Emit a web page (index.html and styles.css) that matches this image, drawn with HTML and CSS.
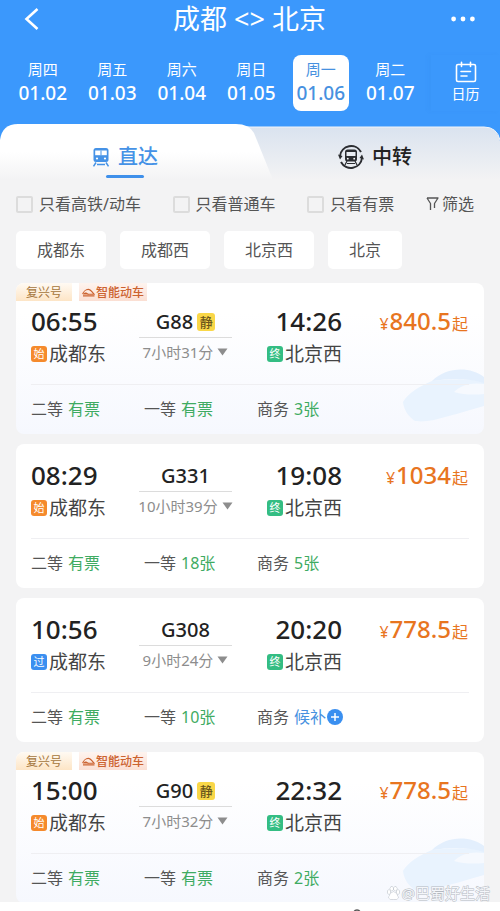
FILE: index.html
```html
<!DOCTYPE html>
<html lang="zh-CN">
<head>
<meta charset="utf-8">
<meta name="viewport" content="width=device-width, initial-scale=1">
<title>成都 - 北京</title>
<link rel="stylesheet" href="styles.css">
</head>
<body>
<svg class="defs" aria-hidden="true">
  <symbol id="fast-train" viewBox="0 0 13 9">
    <path d="M.6 6.200C1.400 3.600 4 1.400 6.200 1.400c2.200 0 3.600 2 5.800 4.800H5.500M1 7.900h11.500" fill="none" stroke="currentColor" stroke-width="1.100"/>
    <path d="M.8 6.500C2 4 4.500 3.600 6.800 6.500Z" fill="currentColor"/>
  </symbol>
  <symbol id="ghost-train" viewBox="0 0 84 60">
    <path d="M3 34C8 25 20 18 32 13 50 11 70 10 84 14V38C66 43 50 48 34 52c-8 1.500-16 2-20 .5C10 49 4 44 3 34Z" fill="#e9f3fe"/>
    <path d="M32 13C46 -1 70-2 84 9v6C68 10 52 10 32 13Z" fill="#e3effd"/>
    <path d="M54 24c6-7 18-10 30-8v10c-10 1-20 1-30-2Z" fill="#f6f9fe"/>
  </symbol>
  <symbol id="caret" viewBox="0 0 11 8"><path d="M.5.5h10L5.500 7.500Z" fill="#8d8d8d"/></symbol>
</svg>
<div class="app">
  <header class="header">
    <div class="title-bar">
      <button class="icon-button" aria-label="返回">
        <svg width="16" height="22" viewBox="0 0 16 22"><path d="M13.500 1 2.500 11l11 10" fill="none" stroke="#fff" stroke-width="2.600"/></svg>
      </button>
      <h1>成都 &lt;&gt; 北京</h1>
      <button class="icon-button" aria-label="更多">
        <svg width="24" height="6" viewBox="0 0 24 6" fill="#fff"><circle cx="2.600" cy="3" r="2.400"/><circle cx="12" cy="3" r="2.400"/><circle cx="21.400" cy="3" r="2.400"/></svg>
      </button>
    </div>
    <div class="date-bar">
      <div class="days">
        <button class="day"><span>周四</span><b>01.02</b></button>
        <button class="day"><span>周五</span><b>01.03</b></button>
        <button class="day"><span>周六</span><b>01.04</b></button>
        <button class="day"><span>周日</span><b>01.05</b></button>
        <button class="day selected"><span>周一</span><b>01.06</b></button>
        <button class="day"><span>周二</span><b>01.07</b></button>
      </div>
      <button class="calendar">
        <svg width="22" height="22" viewBox="0 0 22 22" fill="none" stroke="#fff" stroke-width="1.600" stroke-linecap="round"><path d="M3 3.500h16q1.500 0 1.500 1.500v14q0 1.500-1.500 1.500H3Q1.500 20.500 1.500 19V5q0-1.500 1.500-1.500Z"/><path d="M6.500 1.200v4.300M15.500 1.200v4.300M6 10.500h9.500M6 15h6"/></svg>
        <span>日历</span>
      </button>
    </div>
  </header>

  <nav class="tabs">
    <svg class="tabs-shape" viewBox="0 0 500 56" preserveAspectRatio="none" aria-hidden="true">
      <defs>
        <linearGradient id="back" x1="0" y1="0" x2="0" y2="1"><stop offset="0" stop-color="#dae3ef"/><stop offset="1" stop-color="#f3f3f4"/></linearGradient>
        <linearGradient id="front" x1="0" y1="0" x2="0" y2="1"><stop offset="0" stop-color="#fff"/><stop offset=".5" stop-color="#fff"/><stop offset="1" stop-color="#f3f3f4"/></linearGradient>
      </defs>
      <path d="M200 3H484q13 0 16 14v39H200Z" fill="url(#back)"/>
      <path d="M200 3H484q13 0 16 13" fill="none" stroke="#f2f6fb"/>
      <path d="M0 56V16Q2 0 18 0H236q13 0 18 9l19 47Z" fill="url(#front)"/>
    </svg>
    <button class="tab active">
      <svg width="18" height="20" viewBox="0 0 18 20"><path d="M4 1h10q2.500 0 2.500 2.500v9Q16.500 15 14 15H4Q1.500 15 1.500 12.500v-9Q1.500 1 4 1Z" fill="#4592e6"/><path d="M3.200 3.500h11.600v4.700H3.200Z" fill="#fff"/><path d="M8.500 3.500h1v4.700h-1Z" fill="#4592e6"/><circle cx="5" cy="11.500" r="1.100" fill="#fff"/><circle cx="13" cy="11.500" r="1.100" fill="#fff"/><path d="m4 15.500-2.500 3.800M14 15.500l2.500 3.800M5 17.500h8" stroke="#4592e6" stroke-width="1.500"/></svg>
      <span>直达</span>
    </button>
    <button class="tab">
      <svg width="26" height="26" viewBox="0 0 26 26"><g fill="none" stroke="#2b2d31" stroke-width="2"><path d="M2 12A11.200 11.200 0 0 1 23 8M24 14A11.200 11.200 0 0 1 3 18"/></g><path d="M0 10.500 4.500 12 2 15.500ZM26 15.500 21.500 14 24 10.500Z" fill="#2b2d31"/><rect x="7" y="5.500" width="12" height="12" rx="2.500" fill="#2b2d31"/><path d="M8.500 8h9v4h-9Z" fill="#e9edf3"/><circle cx="9.800" cy="14.700" r=".9" fill="#fff"/><circle cx="16.200" cy="14.700" r=".9" fill="#fff"/><path d="m9 17-2 4M17 17l2 4M9 19.500h8" stroke="#2b2d31" stroke-width="1.200"/></svg>
      <span>中转</span>
    </button>
  </nav>

  <main>
    <form class="filters">
      <label><input type="checkbox">只看高铁/动车</label>
      <label><input type="checkbox">只看普通车</label>
      <label><input type="checkbox">只看有票</label>
      <button type="button" class="filter-button">
        <svg width="13" height="14" viewBox="0 0 13 14" fill="none" stroke="#555" stroke-width="1.300" stroke-linejoin="round"><path d="M1 1h11L8.500 6.500V11M1 1l3.500 5.500V13"/></svg>筛选
      </button>
    </form>
    <div class="chips">
      <button>成都东</button><button>成都西</button><button>北京西</button><button>北京</button>
    </div>

    <section class="list">
      <article class="card special">
        <svg class="ghost"><use href="#ghost-train"/></svg>
        <div class="tags"><span class="tag">复兴号</span><span class="tag smart"><svg width="13" height="9"><use href="#fast-train"/></svg>智能动车</span></div>
        <div class="trip">
          <div class="stop"><time>06:55</time><p><i class="mark start">始</i>成都东</p></div>
          <div class="train"><h2>G88<i class="quiet">静</i></h2><p>7小时31分<svg width="11" height="8"><use href="#caret"/></svg></p></div>
          <div class="stop arrive"><time>14:26</time><p><i class="mark end">终</i>北京西</p></div>
          <div class="price"><small>¥</small>840.5<small>起</small></div>
        </div>
        <div class="seats"><span>二等<em>有票</em></span><span>一等<em>有票</em></span><span>商务<em>3张</em></span></div>
      </article>

      <article class="card">
        <div class="trip">
          <div class="stop"><time>08:29</time><p><i class="mark start">始</i>成都东</p></div>
          <div class="train"><h2>G331</h2><p>10小时39分<svg width="11" height="8"><use href="#caret"/></svg></p></div>
          <div class="stop arrive"><time>19:08</time><p><i class="mark end">终</i>北京西</p></div>
          <div class="price"><small>¥</small>1034<small>起</small></div>
        </div>
        <div class="seats"><span>二等<em>有票</em></span><span>一等<em>18张</em></span><span>商务<em>5张</em></span></div>
      </article>

      <article class="card">
        <div class="trip">
          <div class="stop"><time>10:56</time><p><i class="mark pass">过</i>成都东</p></div>
          <div class="train"><h2>G308</h2><p>9小时24分<svg width="11" height="8"><use href="#caret"/></svg></p></div>
          <div class="stop arrive"><time>20:20</time><p><i class="mark end">终</i>北京西</p></div>
          <div class="price"><small>¥</small>778.5<small>起</small></div>
        </div>
        <div class="seats"><span>二等<em>有票</em></span><span>一等<em>10张</em></span><span>商务<a href="#waitlist">候补<svg width="16" height="16" viewBox="0 0 16 16"><circle cx="8" cy="8" r="8" fill="#3a8ff0"/><path d="M8 4v8M4 8h8" stroke="#fff" stroke-width="1.500"/></svg></a></span></div>
      </article>

      <article class="card special">
        <svg class="ghost"><use href="#ghost-train"/></svg>
        <div class="tags"><span class="tag">复兴号</span><span class="tag smart"><svg width="13" height="9"><use href="#fast-train"/></svg>智能动车</span></div>
        <div class="trip">
          <div class="stop"><time>15:00</time><p><i class="mark start">始</i>成都东</p></div>
          <div class="train"><h2>G90<i class="quiet">静</i></h2><p>7小时32分<svg width="11" height="8"><use href="#caret"/></svg></p></div>
          <div class="stop arrive"><time>22:32</time><p><i class="mark end">终</i>北京西</p></div>
          <div class="price"><small>¥</small>778.5<small>起</small></div>
        </div>
        <div class="seats"><span>二等<em>有票</em></span><span>一等<em>有票</em></span><span>商务<em>2张</em></span></div>
      </article>
    </section>
  </main>

  <footer class="bottom-bar">
    <svg width="8" height="8" viewBox="0 0 8 8"><circle cx="4" cy="10" r="3" fill="none" stroke="#555" stroke-width="1.500"/></svg>
  </footer>
  <div class="watermark">
    <svg width="13" height="14" viewBox="0 0 13 14" fill="#fff" stroke="#aeb4bb" stroke-width=".9"><ellipse cx="2" cy="6" rx="1.500" ry="2"/><ellipse cx="4.700" cy="2.700" rx="1.500" ry="2"/><ellipse cx="8.400" cy="2.700" rx="1.500" ry="2"/><ellipse cx="11" cy="6" rx="1.500" ry="2"/><path d="M6.500 6C4.500 6 2 9.500 2 11.500s2.500 2 4.500 1.500c2 .5 4.500.5 4.500-1.500S8.500 6 6.500 6Z"/></svg>
    <span>@巴蜀好生活</span>
  </div>
</div>
</body>
</html>
```

FILE: styles.css
```css
* {
  box-sizing: border-box;
  margin: 0;
}

body {
  background: #f3f3f4;
  color: #555;
  font: 16px/24px "Noto Sans", "Noto Sans CJK SC", sans-serif;
}

button {
  padding: 0;
  border: 0;
  background: none;
  color: inherit;
  font: inherit;
}

i,
em {
  font-style: normal;
}

svg {
  flex: none;
}

.defs {
  position: absolute;
  width: 0;
  height: 0;
}

.app {
  position: relative;
  display: flex;
  flex-direction: column;
  height: 100vh;
  overflow: hidden;
}

/* Header */
.header {
  flex: none;
  background: #3b98fc;
  color: #fff;
  padding-bottom: 13px;
}

.title-bar {
  display: flex;
  align-items: center;
  justify-content: space-between;
  height: 38px;
  padding: 0 25px 0 24px;
}

.title-bar h1 {
  font-size: 27px;
  line-height: 38px;
  font-weight: 400;
}

.icon-button {
  display: flex;
  width: 24px;
}

.date-bar {
  display: flex;
  margin-top: 17px;
  padding-left: 8px;
}

.days {
  flex: 1;
  display: grid;
  grid-template-columns: repeat(6, 1fr);
  justify-items: center;
}

.day {
  display: flex;
  flex-direction: column;
  align-items: center;
  width: 56px;
  height: 56px;
  padding-top: 2px;
  border-radius: 8px;
  font-size: 15px;
}

.day b {
  font-size: 19px;
  font-weight: 500;
}

.day.selected {
  background: #fff;
  color: #4791e0;
}

.calendar {
  display: flex;
  flex-direction: column;
  align-items: center;
  width: 69px;
  margin-left: 6px;
  padding-top: 6px;
  font-size: 14px;
  line-height: 22px;
  box-shadow: -3px 0 5px rgba(20, 90, 190, .04);
}

/* Tabs */
.tabs {
  position: relative;
  flex: none;
  display: flex;
  height: 56px;
  background: linear-gradient(#3b98fc 50%, #f3f3f4 50%);
}

.tabs-shape {
  position: absolute;
  inset: 0;
  width: 100%;
  height: 100%;
}

.tab {
  position: relative;
  flex: 1;
  display: flex;
  align-items: center;
  justify-content: center;
  gap: 8px;
  padding-top: 10px;
  color: #222;
  font-size: 20px;
  font-weight: 500;
}

.tab.active {
  color: #4592e6;
}

.tab.active::after {
  content: "";
  position: absolute;
  bottom: 2px;
  left: 50%;
  width: 38px;
  height: 3px;
  margin-left: -19px;
  border-radius: 2px;
  background: #3f90ea;
}

/* Filters */
main {
  flex: 1;
  min-height: 0;
  overflow: hidden;
}

.filters {
  display: flex;
  justify-content: space-between;
  padding: 12px 26px 0 16px;
}

.filters label,
.filter-button {
  display: flex;
  align-items: center;
}

.filters input {
  appearance: none;
  width: 17px;
  height: 17px;
  margin: 0 6px 0 0;
  border: 2px solid #dcdcdc;
  border-radius: 2px;
}

.filter-button {
  gap: 3px;
}

.chips {
  display: flex;
  gap: 14px;
  padding: 15px 16px 14px;
}

.chips button {
  height: 38px;
  padding: 0 21px;
  border-radius: 5px;
  background: #fff;
}

/* Train cards */
.list {
  display: grid;
  gap: 10px;
  padding: 0 16px;
}

.card {
  position: relative;
  overflow: hidden;
  padding: 16px 15px 13px;
  border-radius: 8px;
  background: #fff;
}

.card.special {
  padding-top: 0;
  background: linear-gradient(#fff 20%, #f6f8fe);
}

.ghost {
  position: absolute;
  right: 0;
  bottom: 6px;
  width: 84px;
  height: 60px;
}

.tags {
  display: flex;
  gap: 7px;
  height: 18px;
  margin: 0 -15px 5px;
  font-size: 12px;
  line-height: 19px;
}

.tag {
  padding: 0 10px;
  background: linear-gradient(#fffaf3, #fde5c6);
  color: #a5763c;
}

.tag.smart {
  display: flex;
  align-items: center;
  gap: 1px;
  padding: 0 3px;
  background: linear-gradient(#fef4ef, #fbdfd3);
  color: #cc6330;
  font-weight: 500;
}

.trip {
  position: relative;
  display: grid;
  grid-template-columns: 108fr 128fr 75fr 127fr;
  height: 79px;
  border-bottom: 1px solid #efeff2;
}

.stop time {
  display: block;
  color: #222;
  font-size: 26px;
  line-height: 30px;
  font-weight: 500;
}

.stop p {
  display: flex;
  align-items: center;
  gap: 2px;
  color: #444;
  font-size: 19px;
  line-height: 36px;
  white-space: nowrap;
}

.arrive {
  text-align: right;
}

.mark {
  width: 16px;
  height: 16px;
  border-radius: 3px;
  color: #fff;
  font-size: 11px;
  line-height: 16px;
  text-align: center;
}

.start {
  background: #f58a2c;
}

.end {
  background: #34bd83;
}

.pass {
  background: #3b8ff0;
}

.train {
  width: 93px;
}

.train h2 {
  display: flex;
  align-items: center;
  justify-content: center;
  gap: 4px;
  height: 32px;
  border-bottom: 1px solid #dcdcdc;
  color: #222;
  font-size: 20px;
  font-weight: 500;
}

.quiet {
  width: 18px;
  height: 18px;
  border-radius: 3px;
  background: #f9d748;
  color: #6a561c;
  font-size: 13px;
  line-height: 18px;
  text-align: center;
}

.train p {
  display: flex;
  align-items: center;
  justify-content: center;
  gap: 4px;
  padding-top: 2px;
  color: #8d8d8d;
  font-size: 15px;
  white-space: nowrap;
}

.price {
  color: #e8751f;
  font-size: 24px;
  line-height: 30px;
  font-weight: 500;
  text-align: right;
  white-space: nowrap;
}

.price small {
  padding: 0 1px;
  font-size: 16px;
  font-weight: 400;
}

.seats {
  position: relative;
  display: grid;
  grid-template-columns: 113fr 113fr 212fr;
  padding-top: 12px;
}

.seats span,
.seats a {
  display: flex;
  align-items: center;
}

.seats span {
  gap: 5px;
}

.seats em {
  color: #3fab62;
}

.seats a {
  gap: 1px;
  color: #4791e0;
  text-decoration: none;
}

/* Bottom edge */
.bottom-bar {
  flex: none;
  display: flex;
  align-items: end;
  justify-content: center;
  height: 9px;
  padding-left: 214px;
  background: #fff;
}

.watermark {
  position: absolute;
  right: 10px;
  bottom: 6px;
  display: flex;
  align-items: center;
  gap: 2px;
  color: #f4f6fa;
  -webkit-text-stroke: 1px #b4b9c0;
  paint-order: stroke fill;
  font-size: 15px;
}
```
